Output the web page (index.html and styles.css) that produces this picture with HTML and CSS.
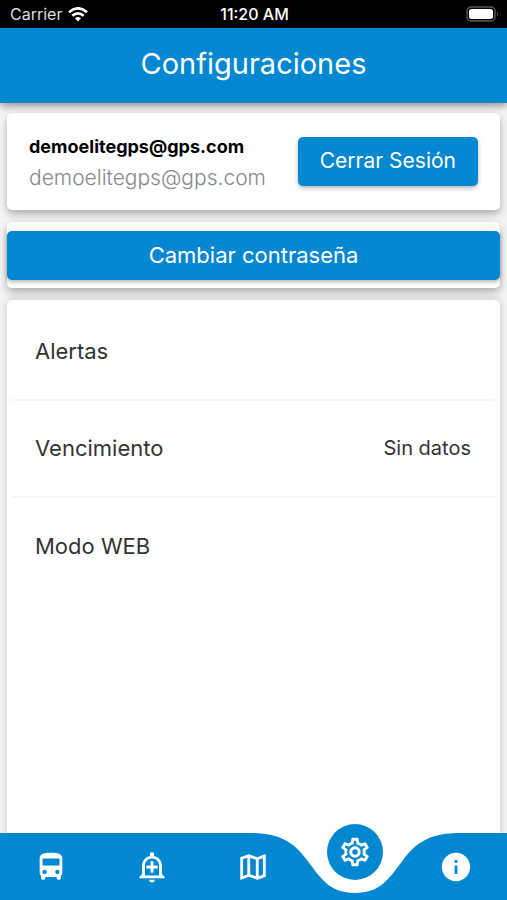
FILE: index.html
```html
<!DOCTYPE html>
<html lang="es">
<head>
<meta charset="utf-8">
<meta name="viewport" content="width=device-width, initial-scale=1">
<title>Configuraciones</title>
<link rel="stylesheet" href="styles.css">
</head>
<body>
<div class="status">
  <div class="carrier">Carrier
    <svg width="20" height="15" viewBox="0 0 20 15" fill="none" stroke="#fff" stroke-width="2.8" aria-hidden="true"><path d="M1 5.2Q10-2.4 19 5.2M4.3 8.8Q10 4 15.700 8.800"/><path d="M7 11.300Q10 8.900 13 11.300L10 14.500Z" fill="#fff" stroke="none"/></svg>
  </div>
  <time class="clock">11:20 AM</time>
  <svg class="battery" width="33" height="16" viewBox="0 0 33 16" aria-hidden="true"><rect x="1" y="1" width="28" height="14" rx="4" fill="none" stroke="#59595b" stroke-width="1.300"/><rect x="3" y="3" width="24" height="10" rx="2.500" fill="#fff"/><path d="M31 5.500q2 2.500 0 5z" fill="#59595b"/></svg>
</div>
<header class="header"><h1>Configuraciones</h1></header>
<main class="main">
  <section class="card account">
    <div class="identity">
      <strong>demoelitegps@gps.com</strong>
      <span>demoelitegps@gps.com</span>
    </div>
    <button class="button" type="button">Cerrar Sesión</button>
  </section>
  <section class="card password">
    <button class="button wide" type="button">Cambiar contraseña</button>
  </section>
  <section class="card settings">
    <a class="row" href="#alertas">Alertas</a>
    <div class="row"><span>Vencimiento</span><span class="value">Sin datos</span></div>
    <a class="row" href="#web">Modo WEB</a>
  </section>
</main>
<nav class="nav" aria-label="Principal">
  <svg class="nav-shape" viewBox="0 0 507 67" preserveAspectRatio="none" aria-hidden="true"><path d="M0 0H250C278 0 293 8 307 27C321 46 330 60 355 60S389 46 403 27C417 8 432 0 460 0H507V67H0Z"/></svg>
  <a class="tab" href="#unidades" aria-label="Unidades"><svg width="34" height="34" viewBox="0 0 24 24" fill="currentColor"><path d="M4 16c0 .88.39 1.670 1 2.220V20c0 .55.45 1 1 1h1c.55 0 1-.45 1-1v-1h8v1c0 .55.45 1 1 1h1c.55 0 1-.45 1-1v-1.780c.61-.55 1-1.340 1-2.220V6c0-3.500-3.580-4-8-4s-8 .5-8 4v10zm3.500 1c-.83 0-1.500-.67-1.500-1.500S6.670 14 7.500 14s1.500.67 1.500 1.500S8.330 17 7.500 17zm9 0c-.83 0-1.500-.67-1.500-1.500s.67-1.500 1.500-1.500 1.500.67 1.500 1.500-.67 1.500-1.500 1.500zm1.500-6H6V6h12v5z"/></svg></a>
  <a class="tab" href="#avisos" aria-label="Agregar alerta"><svg width="34" height="34" viewBox="0 0 24 24" fill="currentColor"><path d="M10.010 21.010c0 1.100.88 1.990 1.990 1.990s1.990-.89 1.990-1.990h-3.980zM12 6c2.760 0 5 2.240 5 5v7H7v-7c0-2.760 2.240-5 5-5zm0-4.500c-.83 0-1.500.67-1.500 1.500v1.170C7.360 4.850 5 7.650 5 11v6l-2 2v1h18v-1l-2-2v-6c0-3.350-2.360-6.150-5.500-6.830V3c0-.83-.67-1.500-1.500-1.500zM13 8h-2v3H8v2h3v3h2v-3h3v-2h-3V8z"/></svg></a>
  <a class="tab" href="#mapa" aria-label="Mapa"><svg width="34" height="34" viewBox="0 0 24 24" fill="currentColor"><path d="M20.500 3l-.16.030L15 5.100 9 3 3.360 4.900c-.21.070-.36.250-.36.480V20.500c0 .28.220.5.500.5l.16-.030L9 18.900l6 2.100 5.640-1.900c.21-.070.360-.25.360-.48V3.500c0-.28-.22-.5-.5-.5zM10 5.470l4 1.400v11.660l-4-1.400V5.470zm-5 .99l3-1.010v11.700l-3 1.160V6.460zm14 11.080l-3 1.010V6.860l3-1.160v11.840z"/></svg></a>
  <a class="tab active" href="#configuraciones" aria-label="Configuraciones" aria-current="page"><svg width="34" height="34" viewBox="0 0 24 24" fill="currentColor"><path d="M19.430 12.980c.04-.32.070-.64.070-.98s-.03-.66-.07-.98l2.110-1.650c.19-.15.240-.42.120-.64l-2-3.460c-.09-.16-.26-.25-.44-.25-.06 0-.12.010-.17.030l-2.490 1c-.52-.4-1.080-.73-1.690-.98l-.38-2.650C14.460 2.180 14.250 2 14 2h-4c-.25 0-.46.180-.49.420l-.38 2.650c-.61.250-1.170.590-1.690.98l-2.490-1c-.06-.02-.12-.03-.18-.03-.17 0-.34.090-.43.250l-2 3.460c-.13.220-.07.490.12.640l2.110 1.650c-.04.320-.07.650-.07.980s.03.660.07.980l-2.110 1.650c-.19.150-.24.420-.12.640l2 3.460c.09.160.260.250.440.250.06 0 .12-.01.170-.03l2.490-1c.52.4 1.080.73 1.690.98l.38 2.650c.03.240.240.420.490.420h4c.25 0 .46-.18.490-.42l.38-2.650c.61-.25 1.170-.59 1.690-.98l2.490 1c.06.020.12.030.18.030.17 0 .34-.09.430-.25l2-3.460c.12-.22.070-.49-.12-.64l-2.110-1.650zm-1.980-1.710c.04.310.050.520.050.730s-.02.430-.05.730l-.14 1.130.89.700 1.080.84-.7 1.210-1.270-.51-1.040-.42-.9.680c-.43.320-.84.560-1.250.730l-1.060.43-.16 1.130-.2 1.350h-1.400l-.19-1.350-.16-1.130-1.060-.43c-.43-.18-.83-.41-1.230-.71l-.91-.7-1.060.43-1.270.51-.7-1.210 1.080-.84.890-.7-.14-1.130c-.03-.31-.05-.54-.05-.74s.02-.43.050-.73l.14-1.130-.89-.7-1.080-.84.7-1.210 1.270.51 1.040.42.900-.68c.43-.32.840-.56 1.250-.73l1.060-.43.160-1.130.2-1.350h1.390l.19 1.350.16 1.130 1.060.43c.43.180.830.410 1.230.710l.91.700 1.060-.43 1.270-.51.700 1.210-1.070.85-.89.700.14 1.130zM12 8c-2.210 0-4 1.790-4 4s1.790 4 4 4 4-1.790 4-4-1.790-4-4-4zm0 6c-1.100 0-2-.9-2-2s.9-2 2-2 2 .9 2 2-.9 2-2 2z"/></svg></a>
  <a class="tab" href="#info" aria-label="Información"><svg width="34" height="34" viewBox="0 0 24 24" fill="currentColor"><path d="M12 2C6.480 2 2 6.480 2 12s4.480 10 10 10 10-4.480 10-10S17.520 2 12 2zm1 15h-2v-6h2v6zm0-8h-2V7h2v2z"/></svg></a>
</nav>
</body>
</html>
```
FILE: styles.css
```css
* { box-sizing: border-box; }

body {
  margin: 0;
  min-height: 100vh;
  display: flex;
  flex-direction: column;
  background: #f5f5f5;
  color: #333;
  font-family: Inter, "Open Sans", sans-serif;
}

a { color: inherit; text-decoration: none; }

.status {
  height: 28px;
  padding: 0 8px 0 10px;
  display: grid;
  grid-template-columns: 1fr auto 1fr;
  align-items: center;
  background: #000;
  color: #fff;
  font-size: 16px;
}

.carrier { display: flex; align-items: center; gap: 6px; color: #ddd; }
.clock { font-weight: 500; }
.battery { justify-self: end; }

.header {
  height: 75px;
  padding-bottom: 4px;
  display: flex;
  align-items: center;
  justify-content: center;
  background: #0288d1;
  color: #fff;
  box-shadow: 0 3px 8px rgba(0, 0, 0, .4);
  position: relative;
  z-index: 1;
}

.header h1 { margin: 0; font-size: 29px; font-weight: 400; }

.main {
  flex: 1;
  display: flex;
  flex-direction: column;
  padding: 10px 7px 0;
}

.card {
  background: #fff;
  border-radius: 5px;
  box-shadow: 0 4px 8px rgba(0, 0, 0, .3);
}

.account {
  min-height: 97px;
  padding: 0 22px;
  display: flex;
  align-items: center;
  justify-content: space-between;
}

.identity { display: flex; flex-direction: column; line-height: 31px; }
.identity strong { color: #000; font-size: 18px; font-weight: 700; }
.identity span { color: #888; font-size: 21px; font-weight: 300; }

.button {
  height: 49px;
  padding: 0 22px 2px;
  border: 0;
  border-radius: 5px;
  background: #0288d1;
  color: #fff;
  font: inherit;
  font-size: 21px;
  box-shadow: 0 2px 4px rgba(0, 0, 0, .3);
}

.password { margin-top: 12px; padding: 9px 0 8px; }
.wide { display: block; width: 100%; font-size: 22px; }

.settings {
  flex: 1;
  margin-top: 12px;
  padding: 4px 5px 67px;
  box-shadow: 0 0 8px rgba(0, 0, 0, .2);
}

.row {
  height: 97px;
  padding: 0 24px 2px 23px;
  display: flex;
  align-items: center;
  justify-content: space-between;
  border-bottom: 2px solid #f6f6f6;
  font-size: 22px;
}

.row:last-child { border-bottom: 0; }
.value { font-size: 20px; }

.nav {
  position: sticky;
  bottom: 0;
  z-index: 1;
  height: 67px;
  margin-top: -67px;
  display: grid;
  grid-template-columns: repeat(5, 1fr);
  grid-template-rows: 67px;
  align-items: center;
  justify-items: center;
  color: #fff;
}

.nav-shape {
  position: absolute;
  inset: 0;
  width: 100%;
  height: 100%;
  fill: #0288d1;
}

.tab { display: flex; position: relative; }

.active {
  width: 56px;
  height: 56px;
  margin-bottom: 29px;
  align-items: center;
  justify-content: center;
  border-radius: 50%;
  background: #0288d1;
}
```
